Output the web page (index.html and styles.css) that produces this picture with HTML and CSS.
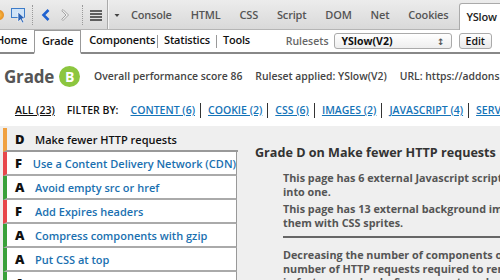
FILE: index.html
```html
<!DOCTYPE html>
<html lang="en">
<head>
	<title>YSlow - Grade</title>
	<link rel="stylesheet" href="styles.css">
</head>
<body>

	<div class="toolbar">
		<div class="tools">
			<span class="bug"></span>
			<svg class="ico inspect" width="18" height="16" viewBox="0 0 18 16">
				<rect x="1.5" y="1.5" width="13" height="9" fill="#cfe3f7" stroke="#3d7cc9"/>
				<path d="M8 5 L8 15 L10.5 12.5 L12.5 16 L14 15.2 L12 11.8 L15 11.5 Z" fill="#2b63b5" stroke="#fff" stroke-width="0.6"/>
			</svg>
			<span class="dots"></span>
			<svg class="ico back" width="12" height="14" viewBox="0 0 12 14">
				<path d="M8.5 2 L3.5 7 L8.5 12" fill="none" stroke="#1f62d0" stroke-width="2.6"/>
			</svg>
			<svg class="ico fwd" width="12" height="14" viewBox="0 0 12 14">
				<path d="M3 1.5 L8.5 7 L3 12.5 L1.8 11.3 L6 7 L1.8 2.7 Z" fill="#f4f4f4" stroke="#999" stroke-width="0.9"/>
			</svg>
			<span class="dots"></span>
			<svg class="ico list" width="14" height="12" viewBox="0 0 14 12">
				<path d="M1 2h12M1 5h12M1 8h12M1 11h12" stroke="#333" stroke-width="1.4"/>
			</svg>
			<span class="sep"></span>
			<svg class="ico" width="8" height="8" viewBox="0 0 8 8">
				<path d="M1.5 3 L6.5 3 L4 6 Z" fill="#444"/>
			</svg>
		</div>
		<div class="tabs">
			<span class="tab">Console</span>
			<span class="tab">HTML</span>
			<span class="tab">CSS</span>
			<span class="tab">Script</span>
			<span class="tab">DOM</span>
			<span class="tab">Net</span>
			<span class="tab">Cookies</span>
			<span class="tab active">YSlow</span>
		</div>
	</div>

	<div class="subbar">
		<div class="ytabs">
			<span class="ytab home">Home</span>
			<span class="ytab current">Grade</span>
			<span class="ytab tight">Components</span>
			<span class="vsep"></span>
			<span class="ytab">Statistics</span>
			<span class="vsep"></span>
			<span class="ytab">Tools</span>
		</div>
		<div class="rulesets">
			<span class="label">Rulesets</span>
			<span class="select">YSlow(V2) <span class="updown">&#8597;</span></span>
			<span class="btn">Edit</span>
		</div>
	</div>

	<div class="grade-row">
		<span class="grade-title">Grade</span>
		<span class="badge">B</span>
		<span class="info">Overall performance score 86</span>
		<span class="info">Ruleset applied: YSlow(V2)</span>
		<span class="info">URL: https://addons.mozilla.org/</span>
	</div>

	<div class="filters">
		<a class="all">ALL (23)</a>
		<span class="filter-by">FILTER BY:</span>
		<a class="flt">CONTENT (6)</a><span class="pipe"></span>
		<a class="flt">COOKIE (2)</a><span class="pipe"></span>
		<a class="flt">CSS (6)</a><span class="pipe"></span>
		<a class="flt">IMAGES (2)</a><span class="pipe"></span>
		<a class="flt">JAVASCRIPT (4)</a><span class="pipe"></span>
		<a class="flt">SERVER (5)</a>
	</div>

	<div class="main">
		<ul class="rules">
			<li class="rule sel g-d"><b>D</b><span>Make fewer HTTP requests</span></li>
			<li class="rule g-f"><b>F</b><span>Use a Content Delivery Network (CDN)</span></li>
			<li class="rule g-a"><b>A</b><span>Avoid empty src or href</span></li>
			<li class="rule g-f"><b>F</b><span>Add Expires headers</span></li>
			<li class="rule g-a"><b>A</b><span>Compress components with gzip</span></li>
			<li class="rule g-a"><b>A</b><span>Put CSS at top</span></li>
			<li class="rule g-a"><b>A</b><span>Put JavaScript at bottom</span></li>
		</ul>
		<div class="detail">
			<h3>Grade D on Make fewer HTTP requests</h3>
			<div class="msg">
				<p>This page has 6 external Javascript scripts. Try combining them<br>into one.</p>
				<p>This page has 13 external background images. Try combining<br>them with CSS sprites.</p>
			</div>
			<hr>
			<p class="desc">Decreasing the number of components on a page reduces the<br>number of HTTP requests required to render the page, resulting<br>in faster page loads. Some ways to reduce the number of components</p>
		</div>
	</div>

</body>
</html>
```

FILE: styles.css
```css
body {
	margin: 0;
	font-family: "Open Sans", "DejaVu Sans", sans-serif;
	color: #333;
	background-color: #fff;
	overflow: hidden;
	width: 500px;
	height: 280px;
}
.toolbar{
	height: 30px;
	display: flex;
	justify-content: space-between;
	align-items: flex-end;
	background: linear-gradient(#ececec, #d9d9d9);
	border-bottom: 1px solid #b5b5b5;
	box-sizing: border-box;
	white-space: nowrap;
}
.tools{
	display: flex;
	align-items: center;
	height: 29px;
	margin-left: -6px;
	flex-shrink: 0;
}
.bug{
	width: 10px;
	height: 10px;
	border-radius: 50%;
	background: radial-gradient(#f9c04a, #e07a12);
	margin-right: 6px;
}
.ico{
	display: block;
}
.inspect{
	margin-right: 2px;
}
.back{
	margin-left: 1px;
}
.fwd{
	margin: 0 8px;
}
.list{
	margin: 0 4px 0 0;
}
.dots{
	width: 0;
	height: 20px;
	border-left: 1px dotted #999;
	margin: 0 6px 0 2px;
}
.sep{
	width: 1px;
	height: 29px;
	background-color: #aaa;
	border-right: 1px solid #f5f5f5;
	margin: 0 4px 0 0;
}
.tabs{
	display: flex;
	align-items: flex-end;
	margin-right: 3px;
}
.tab{
	font-size: 11px;
	font-weight: 600;
	letter-spacing: -0.2px;
	color: #555;
	padding: 4px 9px 7px 10px;
}
.tab.active{
	background-color: #fff;
	color: #222;
	border: 1px solid #aaa;
	border-bottom: 0;
	border-radius: 3px 3px 0 0;
	padding: 5px 5px 6px 6px;
	margin-bottom: -1px;
	margin-left: 2px;
}

.subbar{
	height: 22px;
	display: flex;
	justify-content: space-between;
	align-items: flex-end;
	border-bottom: 2px solid #888;
	white-space: nowrap;
}
.ytabs{
	display: flex;
	align-items: flex-end;
	margin-bottom: -2px;
}
.ytab{
	flex-shrink: 0;
	font-size: 11px;
	font-weight: 600;
	letter-spacing: -0.2px;
	color: #111;
	padding: 3px 6px 5px;
	border-bottom: 2px solid transparent;
}
.ytab.home{
	margin-left: -10px;
}
.ytab.tight{
	padding-right: 2px;
}
.ytab.current{
	border: 1px solid #999;
	border-bottom: 2px solid #fff;
	margin: 0 2px 0 1px;
	padding: 2px 7px 4px;
}
.vsep{
	flex-shrink: 0;
	width: 1px;
	height: 13px;
	background-color: #999;
	margin-bottom: 6px;
}
.rulesets{
	display: flex;
	align-items: center;
	gap: 5px;
	margin-bottom: 3px;
	margin-right: 8px;
}
.label{
	font-size: 10.5px;
	font-weight: 600;
	color: #666;
}
.select{
	width: 118px;
	box-sizing: border-box;
	height: 16px;
	display: flex;
	justify-content: space-between;
	align-items: center;
	font-size: 10.5px;
	font-weight: 700;
	color: #111;
	padding: 0 6px 0 7px;
	border: 1px solid #aaa;
	border-radius: 3px;
	background: linear-gradient(#fff, #eee);
}
.updown{
	font-size: 9px;
	color: #555;
}
.btn{
	font-size: 10.5px;
	font-weight: 600;
	color: #111;
	padding: 0 6px;
	height: 16px;
	line-height: 15px;
	box-sizing: border-box;
	border: 1px solid #aaa;
	border-radius: 3px;
	background: linear-gradient(#fff, #e9e9e9);
	margin-left: 2px;
}

.grade-row{
	display: flex;
	align-items: center;
	height: 22px;
	margin-top: 11px;
	padding-left: 4px;
	white-space: nowrap;
}
.grade-title{
	font-size: 17px;
	font-weight: 700;
	color: #555;
	letter-spacing: -0.2px;
}
.badge{
	flex-shrink: 0;
	width: 21px;
	height: 21px;
	border-radius: 50%;
	background-color: #8cc63f;
	color: #fff;
	font-size: 14px;
	font-weight: 700;
	text-align: center;
	line-height: 21px;
	margin-left: 5px;
	margin-right: 14px;
}
.info{
	font-size: 10.4px;
	font-weight: 600;
	color: #444;
	margin-right: 13px;
}

.filters{
	display: flex;
	align-items: center;
	margin-top: 13px;
	padding-left: 15px;
	font-size: 10.5px;
	font-weight: 600;
	white-space: nowrap;
	height: 20px;
}
.filters a, .filters span{
	flex-shrink: 0;
}
.all{
	color: #111;
	text-decoration: underline;
	margin-right: 12px;
}
.filter-by{
	color: #111;
	margin-right: 12px;
}
.flt{
	color: #1574b8;
	text-decoration: underline;
}
.pipe{
	width: 1px;
	height: 15px;
	background-color: #333;
	margin: 0 7px 0 5px;
}

.main{
	display: grid;
	grid-template-columns: 237px 1fr;
	margin-top: 6px;
	background-color: #efefef;
	height: 200px;
}
.rules{
	list-style: none;
	margin: 0;
	padding: 2px 0 0 3px;
}
.rule{
	display: flex;
	align-items: center;
	height: 22px;
	background-color: #fff;
	border: 1px solid #999;
	border-top: 0;
	border-left: 4px solid #3aa13a;
	border-bottom: 2px solid #aaa;
	font-size: 11px;
	font-weight: 600;
	white-space: nowrap;
}
.rule b{
	width: 12px;
	font-size: 13px;
	color: #111;
	margin-left: 8px;
	margin-right: 8px;
}
.rule span{
	color: #1a70b0;
}
.rule.sel{
	background-color: #efefef;
	border-right: 0;
	border-bottom-color: #999;
	margin-right: -1px;
}
.rule.sel span{
	color: #111;
}
.g-d{
	border-left-color: #f0a040 !important;
}
.g-f{
	border-left-color: #e8474b !important;
}
.detail{
	padding: 18px 0 0 18px;
	white-space: nowrap;
	overflow: hidden;
}
.detail h3{
	margin: 0;
	font-size: 12.6px;
	font-weight: 700;
	color: #333;
}
.msg{
	margin: 10px 0 0 28px;
}
.detail p{
	margin: 0 0 4px;
	font-size: 10.8px;
	font-weight: 700;
	color: #555;
	line-height: 13.5px;
}
.detail hr{
	margin: 7px 0 0 28px;
	border: 0;
	border-top: 2px solid #666;
}
.detail p.desc{
	margin: 10px 0 0 28px;
}
```
